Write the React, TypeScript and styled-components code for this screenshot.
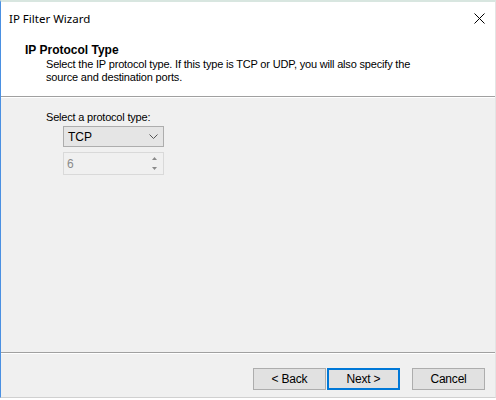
import React from "react";
import styled, { createGlobalStyle } from "styled-components";

const Global = createGlobalStyle`
  html, body { margin: 0; padding: 0; background: #ffffff; }
  body { font-family: "Liberation Sans", Arial, sans-serif; font-size: 11px; color: #000; }
`;

const Window = styled.div`
  width: 496px;
  height: 398px;
  display: flex;
  flex-direction: column;
  border-left: 1px solid #4a90e2;
  border-top: 2px solid #d8e6e0;
  border-right: 1px solid #e4e4e4;
  border-bottom: 1px solid #d0d0d0;
  box-sizing: border-box;
  background: #f0f0f0;
`;

const TitleBar = styled.div`
  height: 33px;
  background: #ffffff;
  display: flex;
  align-items: center;
  justify-content: space-between;
  padding: 0 9px 0 8px;
  font-family: "Noto Sans", "Open Sans", sans-serif;
  font-size: 11.5px;
  color: #000;
`;

const CloseIcon = styled.svg`
  width: 11px;
  height: 11px;
  margin-right: 1px;
`;

const Header = styled.div`
  height: 61px;
  background: #ffffff;
  padding: 7px 0 0 24px;
  box-sizing: border-box;
`;

const HeaderTitle = styled.div`
  font-weight: bold;
  font-size: 12px;
  line-height: 16px;
`;

const HeaderText = styled.div`
  padding-left: 21px;
  line-height: 13px;
  font-size: 11px;
  letter-spacing: -0.18px;
`;

const Separator = styled.div`
  height: 1px;
  background: #a0a0a0;
  border-bottom: 1px solid #ffffff;
`;

const Body = styled.div`
  flex: 1;
  padding: 13px 0 0 45px;
  display: flex;
  flex-direction: column;
`;

const Label = styled.div`
  line-height: 13px;
  margin-bottom: 2px;
  letter-spacing: -0.2px;
`;

const Combo = styled.div`
  margin-left: 17px;
  width: 101px;
  height: 21px;
  box-sizing: border-box;
  border: 1px solid #adadad;
  background: #e5e5e5;
  display: flex;
  align-items: center;
  justify-content: space-between;
  padding: 0 5px 0 4px;
  font-size: 12px;
`;

const Spin = styled.div`
  margin-left: 17px;
  margin-top: 5px;
  width: 101px;
  height: 23px;
  box-sizing: border-box;
  border: 1px solid #d9d9d9;
  background: #f0f0f0;
  display: flex;
  align-items: stretch;
  justify-content: space-between;
  color: #8a8a8a;
  font-size: 12px;
`;

const SpinValue = styled.div`
  display: flex;
  align-items: center;
  padding-left: 3px;
`;

const SpinButtons = styled.div`
  width: 16px;
  display: flex;
  flex-direction: column;
  padding: 1px 1px 1px 0;
  gap: 1px;
`;

const SpinButton = styled.div`
  flex: 1;
  display: flex;
  align-items: center;
  justify-content: center;
  background: #f0f0f0;
`;

const Footer = styled.div`
  height: 43px;
  display: flex;
  justify-content: flex-end;
  align-items: flex-start;
  padding: 14px 10px 0 0;
  box-sizing: border-box;
`;

const FooterLine = styled.div`
  height: 1px;
  background: #a0a0a0;
  border-bottom: 1px solid #ffffff;
`;

const Button = styled.button<{ $default?: boolean; $gap?: number }>`
  width: 73px;
  height: 22px;
  margin-left: ${(p) => p.$gap ?? 0}px;
  box-sizing: border-box;
  background: #e1e1e1;
  border: ${(p) => (p.$default ? "2px solid #0078d7" : "1px solid #adadad")};
  font-family: "Liberation Sans", Arial, sans-serif;
  font-size: 12px;
  letter-spacing: -0.2px;
  color: #000;
  padding: 0;
`;

export default function App() {
  return (
    <>
      <Global />
      <Window>
        <TitleBar>
          <span>IP Filter Wizard</span>
          <CloseIcon viewBox="0 0 11 11">
            <path d="M0.5 0.5 L10.5 10.5 M10.5 0.5 L0.5 10.5" stroke="#000" strokeWidth="1" />
          </CloseIcon>
        </TitleBar>
        <Header>
          <HeaderTitle>IP Protocol Type</HeaderTitle>
          <HeaderText>
            Select the IP protocol type. If this type is TCP or UDP, you will also specify the
            <br />
            source and destination ports.
          </HeaderText>
        </Header>
        <Separator />
        <Body>
          <Label>Select a protocol type:</Label>
          <Combo>
            <span>TCP</span>
            <svg width="9" height="5" viewBox="0 0 9 5">
              <path d="M0.5 0.5 L4.5 4.5 L8.5 0.5" stroke="#555" fill="none" strokeWidth="1" />
            </svg>
          </Combo>
          <Spin>
            <SpinValue>6</SpinValue>
            <SpinButtons>
              <SpinButton>
                <svg width="5" height="3" viewBox="0 0 5 3">
                  <path d="M2.5 0 L5 3 L0 3 Z" fill="#8a8a8a" />
                </svg>
              </SpinButton>
              <SpinButton>
                <svg width="5" height="3" viewBox="0 0 5 3">
                  <path d="M0 0 L5 0 L2.5 3 Z" fill="#8a8a8a" />
                </svg>
              </SpinButton>
            </SpinButtons>
          </Spin>
        </Body>
        <FooterLine />
        <Footer>
          <Button>&lt; Back</Button>
          <Button $default $gap={1}>Next &gt;</Button>
          <Button $gap={12}>Cancel</Button>
        </Footer>
      </Window>
    </>
  );
}
